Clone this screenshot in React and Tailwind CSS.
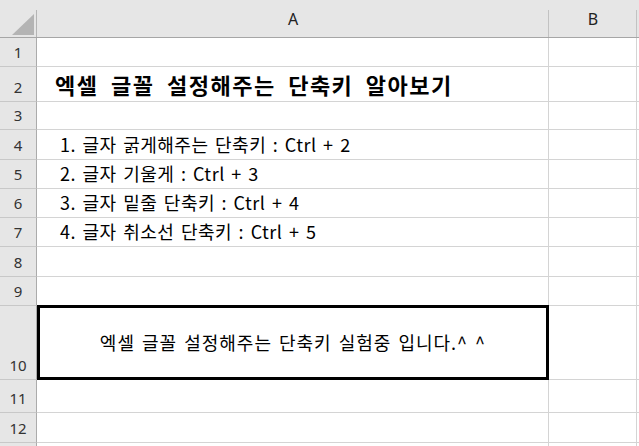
const rows = [
  { n: 1, h: "h-[29px]" },
  { n: 2, h: "h-[35px]", text: "엑셀 글꼴 설정해주는 단축키 알아보기", title: true },
  { n: 3, h: "h-[28px]" },
  { n: 4, h: "h-[30px]", text: "1. 글자 굵게해주는 단축키 : Ctrl + 2" },
  { n: 5, h: "h-[29px]", text: "2. 글자 기울게 : Ctrl + 3" },
  { n: 6, h: "h-[29px]", text: "3. 글자 밑줄 단축키 : Ctrl + 4" },
  { n: 7, h: "h-[29px]", text: "4. 글자 취소선 단축키 : Ctrl + 5" },
  { n: 8, h: "h-[30px]" },
  { n: 9, h: "h-[29px]" },
];

const font = { fontFamily: '"Noto Sans CJK KR", "Noto Sans", sans-serif' };

function RowHead({ n, className = "" }) {
  return (
    <div className={`w-[37px] shrink-0 flex items-end justify-center bg-[#e6e6e6] border-r border-b border-r-[#ababab] border-b-[#c8c8c8] text-[15px] text-[#333] leading-none pb-[6px] ${className}`} style={{ fontFamily: '"Noto Sans", sans-serif' }}>
      {n}
    </div>
  );
}

export default function App() {
  return (
    <div className="w-[639px] h-[446px] overflow-hidden bg-white select-none" style={font}>
      <div className="flex h-[38px] bg-[#e6e6e6] border-b border-[#a6a6a6]">
        <div className="w-[37px] shrink-0 relative">
          <div className="absolute right-0 top-[10px] bottom-0 w-px bg-[#b5b5b5]" />
          <svg className="absolute left-[12px] top-[14px]" width="22" height="21" viewBox="0 0 22 21">
            <polygon points="22,0 22,21 0,21" fill="#b4b4b4" />
          </svg>
        </div>
        <div className="w-[512px] shrink-0 relative flex items-center justify-center text-[16px] text-[#222]" style={{ fontFamily: '"Noto Sans", sans-serif' }}>
          A
          <div className="absolute right-0 top-[10px] bottom-0 w-px bg-[#c2c2c2]" />
        </div>
        <div className="w-[88px] shrink-0 relative flex items-center justify-center text-[16px] text-[#222]" style={{ fontFamily: '"Noto Sans", sans-serif' }}>
          B
          <div className="absolute right-0 top-[10px] bottom-0 w-px bg-[#c2c2c2]" />
        </div>
        <div className="flex-1" />
      </div>

      {rows.map((r) => (
        <div key={r.n} className={`flex ${r.h}`}>
          <RowHead n={r.n} />
          <div className={`w-[512px] shrink-0 border-r border-b border-[#d4d4d4] flex items-end text-black whitespace-nowrap leading-none ${r.title ? "pl-[18px] pb-[6px] text-[22px] font-bold tracking-[1.5px] [word-spacing:6px]" : "pl-[23px] pb-[6px] text-[18px] tracking-[0.5px] [word-spacing:2px]"}`}>
            {r.text}
          </div>
          <div className="w-[88px] shrink-0 border-r border-b border-[#d4d4d4]" />
          <div className="flex-1 border-b border-[#d4d4d4]" />
        </div>
      ))}

      <div className="flex h-[74px]">
        <RowHead n={10} />
        <div className="w-[512px] shrink-0 border-[3px] border-black flex items-center justify-center text-[18px] tracking-[1px] [word-spacing:2px] text-black whitespace-nowrap -mt-px">
          엑셀 글꼴 설정해주는 단축키 실험중 입니다.^ ^
        </div>
        <div className="w-[88px] shrink-0 border-r border-b border-[#d4d4d4]" />
        <div className="flex-1 border-b border-[#d4d4d4]" />
      </div>

      {[{ n: 11, h: "h-[33px]" }, { n: 12, h: "h-[30px]" }, { n: "", h: "h-[30px]" }].map((r, i) => (
        <div key={i} className={`flex ${r.h}`}>
          <RowHead n={r.n} />
          <div className="w-[512px] shrink-0 border-r border-b border-[#d4d4d4]" />
          <div className="w-[88px] shrink-0 border-r border-b border-[#d4d4d4]" />
          <div className="flex-1 border-b border-[#d4d4d4]" />
        </div>
      ))}
    </div>
  );
}
